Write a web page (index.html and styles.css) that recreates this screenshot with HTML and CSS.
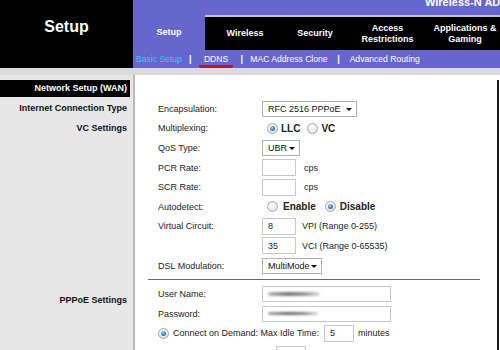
FILE: index.html
```html
<!DOCTYPE html>
<html>
<head>
<meta charset="utf-8">
<link rel="stylesheet" href="styles.css">
</head>
<body>
<div class="header">
  <div class="logo">Setup</div>
  <div class="nav">
    <div class="brand"><span class="brand-text">Wireless-N ADSL2+ Gateway</span></div>
    <div class="tabs">
      <div class="tab active">Setup</div>
      <div class="tabbar">
        <div class="tab w-wireless">Wireless</div>
        <div class="tab w-security">Security</div>
        <div class="tab w-access">Access<br>Restrictions</div>
        <div class="tab w-apps">Applications &amp;<br>Gaming</div>
      </div>
    </div>
    <div class="subnav">
      <span class="sub current">Basic Setup</span>
      <span class="sep">|</span>
      <span class="sub marked">DDNS</span>
      <span class="sep">|</span>
      <span class="sub">MAC Address Clone</span>
      <span class="sep wide">|</span>
      <span class="sub">Advanced Routing</span>
    </div>
  </div>
</div>
<div class="strip"></div>
<div class="main">
  <div class="side">
    <div class="side-head">Network Setup (WAN)</div>
    <div class="side-item">Internet Connection Type</div>
    <div class="side-item">VC Settings</div>
    <div class="side-item pppoe">PPPoE Settings</div>
  </div>
  <div class="content">
    <div class="form">
      <div class="row"><span class="lbl">Encapsulation:</span><span class="select s-enc"><span>RFC 2516 PPPoE</span><i class="caret"></i></span></div>
      <div class="row"><span class="lbl">Multiplexing:</span><span class="radio on ml5"></span><b class="opt">LLC</b><span class="radio ml7"></span><b class="opt">VC</b></div>
      <div class="row"><span class="lbl">QoS Type:</span><span class="select s-qos"><span>UBR</span><i class="caret"></i></span></div>
      <div class="row"><span class="lbl">PCR Rate:</span><span class="input"></span><span class="unit">cps</span></div>
      <div class="row"><span class="lbl">SCR Rate:</span><span class="input"></span><span class="unit">cps</span></div>
      <div class="row"><span class="lbl">Autodetect:</span><span class="radio ml5"></span><b class="opt o-en">Enable</b><span class="radio on ml9"></span><b class="opt o-dis">Disable</b></div>
      <div class="row"><span class="lbl">Virtual Circuit:</span><span class="input">8</span><span class="hint">VPI (Range 0-255)</span></div>
      <div class="row"><span class="lbl"></span><span class="input">35</span><span class="hint">VCI (Range 0-65535)</span></div>
      <div class="row"><span class="lbl">DSL Modulation:</span><span class="select s-dsl"><span>MultiMode</span><i class="caret"></i></span></div>
      <div class="rule"></div>
      <div class="row"><span class="lbl">User Name:</span><span class="input wide-in"><span class="blur b1"></span></span></div>
      <div class="row"><span class="lbl">Password:</span><span class="input wide-in"><span class="blur b2"></span></span></div>
      <div class="row"><span class="radio on"></span><span class="demand">Connect on Demand: Max Idle Time:</span><span class="input idle">5</span><span class="unit mins">minutes</span></div>
      <div class="row last"><span class="input redial"></span></div>
    </div>
    <div class="edge"></div>
  </div>
</div>
</body>
</html>
```
FILE: styles.css
```css
* { box-sizing: border-box; }
html, body { margin: 0; padding: 0; }
body {
  width: 500px;
  height: 350px;
  overflow: hidden;
  background: #e7e7e7;
  font-family: "Liberation Sans", Arial, sans-serif;
  font-size: 9px;
  color: #222;
}
.header { display: flex; height: 68px; }
.logo {
  flex: none;
  width: 133px;
  background: #000;
  color: #fff;
  font-weight: bold;
  font-size: 16px;
  text-align: center;
  padding-top: 18px;
  line-height: 18px;
}
.nav { flex: 1; min-width: 0; background: #6666cc; display: flex; flex-direction: column; }
.brand { height: 15px; overflow: hidden; padding-left: 292px; white-space: nowrap; }
.brand-text {
  display: block;
  color: #fff;
  font-weight: bold;
  font-size: 11px;
  line-height: 11px;
  margin-top: -3px;
}
.tabs { display: flex; height: 35px; }
.tab {
  flex: none;
  display: flex;
  align-items: center;
  justify-content: center;
  text-align: center;
  color: #fff;
  font-weight: bold;
  font-size: 9px;
  line-height: 11px;
}
.tab.active { width: 72px; background: #6666cc; }
.tabbar { flex: 1; display: flex; background: #000; border-top: 2px solid #c4c4c4; }
.w-wireless { width: 80px; }
.w-security { width: 60px; }
.w-access { width: 85px; }
.w-apps { width: 70px; }
.subnav { height: 18px; display: flex; align-items: stretch; padding-left: 3px; color: #fff; font-size: 8.6px; }
.sub { display: flex; align-items: center; }
.sub.current { color: #38c8f4; }
.sub.marked { padding: 0 5px; border-bottom: 3px solid #cc1111; border-radius: 2px; padding-top: 2px; }
.sep { width: 17px; display: flex; align-items: center; justify-content: center; font-weight: bold; font-size: 9px; }
.sep.wide { width: 22px; }
.strip { height: 7px; background: #dcdcdc; }
.main { display: flex; height: 275px; }
.side { flex: none; width: 133px; background: #e7e7e7; padding-top: 5px; }
.side-head {
  background: #000;
  color: #fff;
  font-weight: bold;
  height: 17px;
  line-height: 17px;
  margin-right: 3px;
  text-align: right;
  padding-right: 3px;
}
.side-item {
  height: 20px;
  line-height: 20px;
  text-align: right;
  padding-right: 6px;
  font-weight: bold;
  color: #111;
}
.side-item:nth-child(2) { margin-top: 1px; }
.side-item.pppoe { margin-top: 152px; }
.content { flex: 1; min-width: 0; display: flex; background: #fff; border-left: 2px solid #b8b8b8; }
.form { flex: 1; padding: 24px 15px 0 13px; }
.edge { width: 2px; background: #1a1a1a; margin-top: 5px; margin-right: 1px; }
.row { display: flex; align-items: center; height: 19.6px; padding-left: 10px; white-space: nowrap; }
.row.last { align-items: flex-start; padding-top: 3px; }
.lbl { width: 104px; flex: none; }
.select {
  display: flex;
  align-items: center;
  justify-content: space-between;
  height: 16px;
  border: 1px solid #b0b0b0;
  background: #fff;
  padding: 0 4px 0 5px;
  color: #111;
}
.s-enc { width: 95px; }
.s-qos { width: 38px; }
.s-dsl { width: 60px; }
.caret {
  width: 0;
  height: 0;
  border-left: 3px solid transparent;
  border-right: 3px solid transparent;
  border-top: 3px solid #111;
  margin-top: 1px;
}
.radio {
  width: 11px;
  height: 11px;
  border-radius: 50%;
  border: 1px solid #a8a8a8;
  background: radial-gradient(circle at 40% 35%, #ffffff 0%, #e4e4e4 70%, #cfcfcf 100%);
  flex: none;
  position: relative;
}
.radio.on::after {
  content: "";
  position: absolute;
  left: 2px;
  top: 2px;
  width: 5px;
  height: 5px;
  border-radius: 50%;
  background: radial-gradient(circle at 40% 35%, #9fd4f5 0%, #2a78bd 60%, #1a4f86 100%);
}
.ml5 { margin-left: 5px; }
.ml7 { margin-left: 7px; }
.ml9 { margin-left: 9px; }
.opt { font-size: 10px; font-weight: bold; margin-left: 3px; color: #222; }
.o-en { margin-left: 5px; }
.o-dis { margin-left: 4px; }
.input {
  display: flex;
  align-items: center;
  width: 34px;
  height: 17px;
  border: 1px solid #c8c8c8;
  background: #fff;
  padding-left: 5px;
  flex: none;
}
.unit { margin-left: 8px; }
.hint { margin-left: 6px; }
.rule { height: 1px; background: #6a6a6a; margin: 4px 2px 4px 0; }
.wide-in { width: 129px; height: 16px; }
.blur { display: block; height: 3px; border-radius: 2px; filter: blur(0.8px); }
.b1 { width: 52px; background: linear-gradient(90deg, #bbb, #777 40%, #999 70%, #ddd); height: 4px; }
.b2 { width: 50px; background: linear-gradient(90deg, #aaa, #666 40%, #888 70%, #ddd); }
.demand { margin-left: 4px; }
.idle { width: 30px; margin-left: 5px; }
.mins { margin-left: 4px; }
.redial { width: 30px; margin-left: 118px; }
```
